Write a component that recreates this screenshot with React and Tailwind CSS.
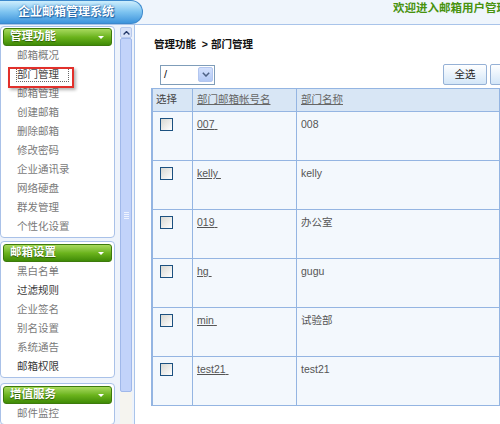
import React from 'react';

const menu1 = [
  { t: '邮箱概况' },
  { t: '部门管理', sel: true },
  { t: '邮箱管理' },
  { t: '创建邮箱' },
  { t: '删除邮箱' },
  { t: '修改密码' },
  { t: '企业通讯录' },
  { t: '网络硬盘' },
  { t: '群发管理' },
  { t: '个性化设置' },
];

const menu2 = [
  { t: '黑白名单' },
  { t: '过滤规则', dark: true },
  { t: '企业签名' },
  { t: '别名设置' },
  { t: '系统通告' },
  { t: '邮箱权限', dark: true },
];

const menu3 = [{ t: '邮件监控' }];

const rows = [
  ['007', '008'],
  ['kelly', 'kelly'],
  ['019', '办公室'],
  ['hg', 'gugu'],
  ['min', '试验部'],
  ['test21', 'test21'],
];

function Item({ it }) {
  if (it.sel) {
    return (
      <div className="relative h-[19px] leading-[19px] pl-[13px] text-[10.5px] text-[#444] whitespace-nowrap">
        <span className="inline-block h-[15px] leading-[13px] pr-[9px] border border-dotted border-[#666]">{it.t}</span>
        <div className="absolute left-[5px] top-[2px] w-[66px] h-[21px] border-2 border-[#e2302b] shadow-[2px_2px_3px_rgba(0,0,0,0.3)]" />
      </div>
    );
  }
  return (
    <div
      className={`h-[19px] leading-[19px] pl-[14px] text-[10.5px] whitespace-nowrap ${
        it.dark ? 'text-[#3a3a3a]' : 'text-[#7a7a7a]'
      }`}
    >
      {it.t}
    </div>
  );
}

function Panel({ title, items, extra }) {
  return (
    <div className={`w-[115px] border border-[#a9c1e8] rounded-[4px] bg-white px-[2px] pb-[1px] ${extra}`}>
      <div className="h-[18px] rounded-[3px] border border-[#3d7a0c] bg-gradient-to-b from-[#a8da5c] via-[#6cb41c] to-[#3f8b06] flex items-center pl-[6px] text-white font-bold text-[11.5px] leading-none [text-shadow:0_1px_1px_#2a5a05]">
        <span>{title}</span>
        <span className="ml-auto mr-[7px] w-0 h-0 border-l-[3px] border-r-[3px] border-t-[3px] border-l-transparent border-r-transparent border-t-white" />
      </div>
      {items.map((it) => (
        <Item key={it.t} it={it} />
      ))}
    </div>
  );
}

function Checkbox() {
  return <div className="w-[13px] h-[13px] border border-[#1c5180] bg-gradient-to-br from-[#d8d8d2] to-white" />;
}

export default function App() {
  return (
    <div className="w-[500px] h-[424px] overflow-hidden bg-white flex flex-col font-['Liberation_Sans','Noto_Sans_CJK_SC',sans-serif]">
      {/* Header */}
      <div className="h-[25px] shrink-0 flex items-start bg-[#eff5fc] border-b border-[#a9c4ea]">
        <div className="w-[143px] h-[24px] shrink-0 rounded-r-full border border-l-0 border-[#3b88cc] bg-gradient-to-b from-[#cdeefd] via-[#7cc3f0] to-[#3d94dc] flex items-center pl-[18px] text-white font-bold text-[12px] whitespace-nowrap [text-shadow:0_0_2px_#1b5fa3,1px_1px_1px_#1b5fa3]">
          企业邮箱管理系统
        </div>
        <div className="flex-1 overflow-hidden whitespace-nowrap pl-[250px] pt-[2px] leading-[13px] text-[11.5px] font-bold text-[#48920e]">
          欢迎进入邮箱用户管理系统
        </div>
      </div>

      {/* Body */}
      <div className="flex flex-1 min-h-0">
        {/* Sidebar */}
        <div className="w-[117px] shrink-0 bg-[#eef3fb] pt-[1px]">
          <Panel title="管理功能" items={menu1} extra="pt-[1px]" />
          <Panel title="邮箱设置" items={menu2} extra="pt-[2px] mt-[3px]" />
          <Panel title="增值服务" items={menu3} extra="pt-[2px] mt-[5px]" />
        </div>

        {/* Scrollbar */}
        <div className="w-[17px] shrink-0 bg-[#eef3fb] pl-[3px] pr-[2px] pt-[2px] flex flex-col">
          <div className="h-[11px] shrink-0 rounded-[2px] bg-[#d7e1f8] border border-[#b7c8ec] flex items-center justify-center">
            <svg width="7" height="4" viewBox="0 0 7 4">
              <path d="M0.6 3.4 L3.5 0.6 L6.4 3.4" stroke="#25396a" strokeWidth="1.4" fill="none" />
            </svg>
          </div>
          <div className="h-[354px] shrink-0 rounded-[2px] bg-[#c2d3fa] border border-[#a0b8ea] flex flex-col items-center justify-center gap-[1px]">
            <div className="w-[5px] h-[1px] bg-[#eef3ff]" />
            <div className="w-[5px] h-[1px] bg-[#eef3ff]" />
            <div className="w-[5px] h-[1px] bg-[#eef3ff]" />
            <div className="w-[5px] h-[1px] bg-[#eef3ff]" />
          </div>
          <div className="flex-1 bg-[#f5f4ef]" />
        </div>

        {/* Main */}
        <div className="flex-1 min-w-0 border-l border-[#a9c4ea] bg-white overflow-hidden">
          <div className="mt-[13px] pl-[19px] text-[10.5px] leading-[12px] font-bold text-[#111] whitespace-nowrap">
            管理功能&nbsp;&nbsp;&gt; 部门管理
          </div>

          <div className="mt-[14px] h-[21px] flex items-center">
            <div className="ml-[25px] w-[55px] h-[20px] shrink-0 border border-[#7f9db9] bg-white flex items-center">
              <span className="pl-[3px] text-[11px] text-[#111]">/</span>
              <div className="ml-auto mr-[1px] w-[15px] h-[15px] rounded-[2px] border border-[#b3c6ef] bg-gradient-to-b from-[#d3e0fd] to-[#b3c9f5] flex items-center justify-center">
                <svg width="8" height="5" viewBox="0 0 8 5">
                  <path d="M0.8 0.8 L4 4 L7.2 0.8" stroke="#4d6185" strokeWidth="1.5" fill="none" />
                </svg>
              </div>
            </div>
            <div className="ml-[228px] w-[44px] h-[21px] shrink-0 rounded-[2px] border border-[#95b1d6] bg-gradient-to-b from-white to-[#d3e6f8] flex items-center justify-center text-[10.5px] text-[#222]">
              全选
            </div>
            <div className="ml-[3px] w-[44px] h-[21px] shrink-0 rounded-[2px] border border-[#95b1d6] bg-gradient-to-b from-white to-[#d3e6f8]" />
          </div>

          <div className="mt-[3px] ml-[16px] w-[349px] border-t border-r border-l-2 border-[#94b5e2] text-[10.5px]">
            <div className="h-[23px] flex border-b border-[#94b5e2] bg-[#d8e6f5]">
              <div className="w-[40px] h-full border-r border-[#94b5e2] pl-[3px] flex items-center text-[#444]">选择</div>
              <div className="w-[104px] h-full border-r border-[#94b5e2] pl-[4px] flex items-center text-[#666] underline">部门邮箱帐号名</div>
              <div className="flex-1 h-full pl-[4px] flex items-center text-[#666] underline">部门名称</div>
            </div>
            {rows.map(([a, b]) => (
              <div key={a} className="h-[49px] flex border-b border-[#94b5e2] bg-[#f3f8fd]">
                <div className="w-[40px] h-full border-r border-[#94b5e2] pl-[7px] pt-[6px]">
                  <Checkbox />
                </div>
                <div className="w-[104px] h-full border-r border-[#94b5e2] pl-[4px] pt-[6px] leading-[12px] text-[#555]">
                  <span className="underline">{a}&nbsp;</span>
                </div>
                <div className="flex-1 h-full pl-[4px] pt-[6px] leading-[12px] text-[#555]">{b}</div>
              </div>
            ))}
          </div>
        </div>
      </div>
    </div>
  );
}
